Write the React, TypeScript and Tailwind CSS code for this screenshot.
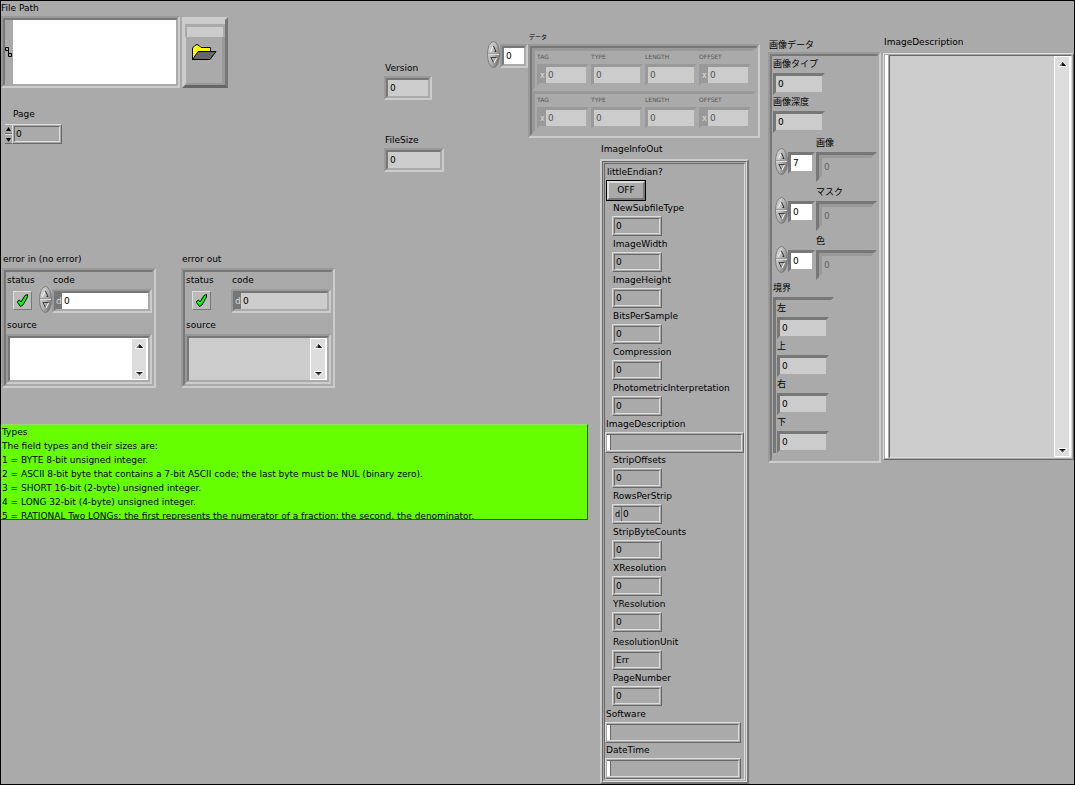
import { useId, useState } from 'react';
import type { ReactNode } from 'react';
import clsx from 'clsx';

const OUTER = 'border-2 border-t-[#999] border-l-[#999] border-r-[#ccc] border-b-[#ccc]';
const INNER = 'border-2 border-t-[#777] border-l-[#777] border-r-[#aaa] border-b-[#aaa]';

type SunkenProps = { className?: string; inner?: string; children?: ReactNode };

const Sunken = ({ className, inner, children }: SunkenProps) => (
  <div className={clsx('flex', OUTER, className)}>
    <div className={clsx('flex min-w-0 flex-1', INNER, inner)}>{children}</div>
  </div>
);

const Etched = ({ className, inner, children }: SunkenProps) => (
  <div
    className={clsx(
      'flex border border-t-[#ddd] border-l-[#ddd] border-r-[#666] border-b-[#666] bg-[#aaa] p-px',
      className,
    )}
  >
    <div
      className={clsx(
        'flex min-w-0 flex-1 border border-t-[#666] border-l-[#666] border-r-[#ddd] border-b-[#ddd]',
        inner,
      )}
    >
      {children}
    </div>
  </div>
);

type ValueProps = { id?: string; label?: string; value?: string; className?: string };

const Value = ({ id, label, value = '0', className = 'pl-0.5' }: ValueProps) => {
  const [text, setText] = useState(value);
  return (
    <input
      id={id}
      aria-label={label}
      type="text"
      value={text}
      onChange={(event) => setText(event.target.value)}
      className={clsx('h-full w-full min-w-0 flex-1 bg-transparent outline-none', className)}
    />
  );
};

/* Oval increment / decrement knob */
const Knob = ({ label }: { label: string }) => (
  <button type="button" aria-label={label} className="block h-[27px] w-[13px] shrink-0">
    <svg viewBox="0 0 13 27" className="block h-full w-full">
      <defs>
        <linearGradient id="knob" x1="0" y1="0" x2="1" y2="0.6">
          <stop offset="0" stopColor="#ddd" />
          <stop offset="0.6" stopColor="#b4b4b4" />
          <stop offset="1" stopColor="#777" />
        </linearGradient>
      </defs>
      <ellipse cx="6.5" cy="13.5" rx="6" ry="13" fill="url(#knob)" stroke="#777" strokeWidth="0.9" />
      <path d="M1 12.500h11" stroke="#999" />
      <path d="M1 13.500h11" stroke="#ddd" />
      <path d="M3.500 10.500L6 5.500" stroke="#fff" fill="none" />
      <path d="M6.500 5L9 10.500H7.500" stroke="#333" fill="none" />
      <path d="M3.500 16.500h6" stroke="#444" fill="none" />
      <path d="M4 16.500L6.500 21.500" stroke="#444" fill="none" />
      <path d="M9.500 17L7 22" stroke="#fff" fill="none" />
    </svg>
  </button>
);

const Arrow = ({ down = false, label }: { down?: boolean; label: string }) => (
  <button type="button" aria-label={label} className="flex h-2.5 w-full items-center justify-center">
    {down ? (
      <svg viewBox="0 0 9 6" className="h-1.5 w-[9px]">
        <path d="M0 1L4.500 6L9 1V0H0Z" fill="#fff" />
        <path d="M1 1L4.500 5L8 1Z" fill="#777" />
        <path d="M1 1L4.500 3L8 1Z" fill="#111" />
      </svg>
    ) : (
      <svg viewBox="0 0 9 6" className="h-1.5 w-[9px]">
        <path d="M0 5L4.500 0L9 5V6H0Z" fill="#fff" />
        <path d="M1 5L4.500 1L8 5Z" fill="#777" />
        <path d="M4.500 1L8 5H4Z" fill="#111" />
      </svg>
    )}
  </button>
);

const Scrollbar = () => (
  <div className="flex w-[17px] shrink-0 flex-col justify-between border border-r-2 border-white bg-[#ddd] pt-0.5">
    <Arrow label="Scroll up" />
    <Arrow label="Scroll down" down />
  </div>
);

const Label = ({ id, children, className }: { id?: string; children: ReactNode; className?: string }) => (
  <label htmlFor={id} className={clsx('block leading-[14px] whitespace-nowrap', className)}>
    {children}
  </label>
);

const SizeField = ({ label, className }: { label: string; className: string }) => {
  const id = useId();
  return (
    <div>
      <Label id={id} className="pb-px pl-px">{label}</Label>
      <Sunken className={clsx('h-6', className)} inner="bg-[#ccc]">
        <Value id={id} />
      </Sunken>
    </div>
  );
};

const FilePath = () => (
  <div>
    <Label id="path" className="pb-px">File Path</Label>
    <div className="flex items-end gap-0.5">
      <Sunken className="h-[72px] w-[179px]">
        <svg viewBox="0 0 8 64" className="h-16 w-2 shrink-0">
          <path d="M.5 27.500h3v3h-3zM3.500 33.500h3v3h-3zM3.500 30.500v3" fill="none" stroke="#000" />
        </svg>
        <textarea id="path" className="h-full min-w-0 flex-1 resize-none bg-white outline-none" />
      </Sunken>
      <button
        type="button"
        aria-label="Browse"
        className="flex h-[71px] w-[46px] flex-col border-3 border-t-[#ccc] border-r-[#777] border-b-[#666] border-l-[#ccc] bg-[#aaa]"
      >
        <span className="block h-1 w-full bg-[#ccc]" />
        <span className="mx-0.5 block h-[13px] self-stretch border-t-3 border-[#aaa] bg-[#ccc]" />
        <span className="flex w-full flex-1 justify-center border-r-3 border-b-2 border-l border-r-[#999] border-b-[#999] border-l-[#ccc] pt-[7px]">
          <svg viewBox="0 0 26 17" className="h-[17px] w-[26px]">
            <path d="M1.500 15.500V4L4 1.500L6 .5L8 1.500L10 3.500H19.500V7.500L14 15.500Z" fill="#ff0" stroke="#000" />
            <path d="M1.500 15.500L7 7.500H25L19 15.500Z" fill="#666" stroke="#000" />
          </svg>
        </span>
      </button>
    </div>
  </div>
);

const PageField = () => (
  <div>
    <Label id="page" className="pb-[3px] pl-3">Page</Label>
    <div className="flex pl-1">
      <div className="flex w-[7px] flex-col">
        {['M1 6L3.500 2L6 6Z', 'M1 3L3.500 7L6 3Z'].map((d, i) => (
          <button
            key={d}
            type="button"
            aria-label={i === 0 ? 'Next page' : 'Previous page'}
            className="h-2.5 w-full border-t border-b border-t-[#ddd] border-b-[#666]"
          >
            <svg viewBox="0 0 7 8" className="block h-2 w-[7px]">
              <path d={d} />
            </svg>
          </button>
        ))}
      </div>
      <Etched className="h-5 w-[50px]">
        <Value id="page" className="pl-px" />
      </Etched>
    </div>
  </div>
);

const ErrorCluster = ({ title, editable = false }: { title: string; editable?: boolean }) => {
  const id = useId();
  const fill = editable ? 'bg-white' : 'bg-[#ccc]';
  return (
    <section>
      <h2 className="pb-0.5 pl-px leading-[14px]">{title}</h2>
      <Sunken className="h-[120px] w-[154px]" inner="flex-col pt-px">
        <div className="flex">
          <div className="w-[33px] pl-px">
            <Label>status</Label>
            <button
              type="button"
              aria-label="status"
              className="mt-1 ml-1.5 flex h-[19px] w-[19px] items-center justify-center border border-t-[#ddd] border-l-[#ddd] border-r-[#777] border-b-[#777] bg-[#bbb]"
            >
              <svg viewBox="0 0 13 15" className="h-[15px] w-[13px] shrink-0">
                <path
                  d="M1.500 8.500L3.500 7L5 9L9 2.500L11.500 1.500V4L7 12L4.500 13.500L1.500 9.500Z"
                  fill="#0f0"
                  stroke="#000"
                />
              </svg>
            </button>
          </div>
          <div className="w-[13px] pt-[13px]">{editable && <Knob label="Change code" />}</div>
          <div className="min-w-0 flex-1">
            <Label id={`${id}code`} className="pb-0.5 pl-px">code</Label>
            <Sunken className="h-6" inner={fill}>
              <span className="w-1.5 bg-[#777] leading-4 text-[#ddd]">d</span>
              <Value id={`${id}code`} />
            </Sunken>
          </div>
        </div>
        <Label id={`${id}source`} className="pt-[5px] pb-0.5 pl-px">source</Label>
        <Sunken className="min-h-0 flex-1" inner={fill}>
          <textarea id={`${id}source`} className="min-w-0 flex-1 resize-none outline-none" />
          <Scrollbar />
        </Sunken>
      </Sunken>
    </section>
  );
};

const IndexBox = ({ value = '0', label }: { value?: string; label: string }) => (
  <Sunken className="h-6 w-7" inner="bg-white">
    <Value label={label} value={value} />
  </Sunken>
);

const tagFields = [
  { name: 'TAG', hex: true },
  { name: 'TYPE', hex: false },
  { name: 'LENGTH', hex: false },
  { name: 'OFFSET', hex: true },
];

const TagRow = () => {
  const id = useId();
  return (
    <div className="flex h-[43px] gap-0.5 border-3 border-t-[#999] border-l-[#999] border-r-[#aaa] border-b-[#aaa] pt-0.5 pl-0.5">
      {tagFields.map(({ name, hex }) => (
        <div key={name} className="w-[52px]">
          <label htmlFor={id + name} className="block pb-[3px] text-[6px] leading-[8px] text-[#555]">
            {name}
          </label>
          <div className="flex h-[22px] border-3 border-t-[#999] border-l-[#999] border-r-[#aaa] border-b-[#aaa] bg-[#ccc] text-[#555]">
            {hex && <span className="w-1.5 bg-[#999] text-[8px] leading-[18px] text-[#ddd]">x</span>}
            <Value id={id + name} />
          </div>
        </div>
      ))}
    </div>
  );
};

const TagArray = () => (
  <section className="col-span-2 pt-8">
    <h2 className="pl-[42px] text-[6px] leading-[8px]">データ</h2>
    <div className="flex items-start">
      <Knob label="Change tag index" />
      <div className="pt-[3px]">
        <IndexBox label="Tag index" />
      </div>
      <div className="pt-[3px]">
        <Sunken className="w-[232px]" inner="flex-col">
          <TagRow />
          <TagRow />
        </Sunken>
      </div>
    </div>
  </section>
);

type InfoProps = { label: string; value?: string; hex?: boolean; gap?: string };

const InfoField = ({ label, value, hex, gap }: InfoProps) => {
  const id = useId();
  return (
    <div className={clsx('pb-px pl-[7px]', gap)}>
      <Label id={id} className="pb-px pl-px">{label}</Label>
      <Etched className="h-5 w-[50px]" inner={hex ? 'border-l-0' : ''}>
        {hex && <span className="border-r border-[#666] px-px text-[8px] leading-4">d</span>}
        <Value id={id} value={value} className="pl-px" />
      </Etched>
    </div>
  );
};

const InfoString = ({ label, width = 'w-[139px]' }: { label: string; width?: string }) => {
  const id = useId();
  return (
    <div>
      <Label id={id} className="pb-px pl-px">{label}</Label>
      <Etched className={clsx('h-[21px]', width)} inner="border-l-0">
        <span className="w-1 border-r border-[#666] bg-white" />
        <Value id={id} value="" />
      </Etched>
    </div>
  );
};

const ImageInfo = () => {
  const [little, setLittle] = useState(false);
  return (
    <section className="row-span-2 pt-1 pl-3">
      <h2 className="pb-[3px] pl-px leading-[14px]">ImageInfoOut</h2>
      <div className="w-[149px] border-2 border-t-[#ccc] border-l-[#ccc] border-r-[#777] border-b-[#777]">
        <div className="border border-t-[#666] border-l-[#666] border-r-[#ddd] border-b-[#ddd] p-px">
          <div className="border border-t-[#666] border-l-[#666] border-r-[#ddd] border-b-[#ddd] pt-px">
            <Label id="endian" className="pb-px pl-0.5">littleEndian?</Label>
            <button
              id="endian"
              type="button"
              onClick={() => setLittle((current) => !current)}
              className="ml-px block h-[21px] w-10 border border-black"
            >
              <span className="block border-2 border-t-[#ddd] border-l-[#ddd] border-r-[#777] border-b-[#777] leading-[15px]">
                {little ? 'ON' : 'OFF'}
              </span>
            </button>
            <InfoField label="NewSubfileType" />
            <InfoField label="ImageWidth" />
            <InfoField label="ImageHeight" />
            <InfoField label="BitsPerSample" />
            <InfoField label="Compression" />
            <InfoField label="PhotometricInterpretation" />
            <InfoString label="ImageDescription" />
            <InfoField label="StripOffsets" />
            <InfoField label="RowsPerStrip" hex />
            <InfoField label="StripByteCounts" />
            <InfoField label="XResolution" />
            <InfoField label="YResolution" />
            <InfoField label="ResolutionUnit" value="Err" gap="pt-0.5" />
            <InfoField label="PageNumber" />
            <InfoString label="Software" width="w-[136px]" />
            <InfoString label="DateTime" width="w-[136px]" />
          </div>
        </div>
      </div>
    </section>
  );
};

const PictureField = ({ label }: { label: string }) => {
  const id = useId();
  return (
    <div>
      <Label id={id} className="pb-0.5">{label}</Label>
      <div className="flex h-[22px] w-[52px] border-3 border-t-[#777] border-l-[#777] border-r-[#aaa] border-b-[#aaa] bg-[#ccc]">
        <Value id={id} />
      </div>
    </div>
  );
};

const PictureArray = ({ label, index }: { label: string; index: string }) => (
  <div>
    <Label className="pb-0.5 pl-[43px]">{label}</Label>
    <div className="flex h-[30px] items-start pl-0.5">
      <div className="-mt-1">
        <Knob label={`Change ${label}`} />
      </div>
      <div className="h-[22px] w-[27px] border-3 border-t-[#777] border-l-[#777] border-r-[#aaa] border-b-[#aaa] bg-white">
        <Value label={`${label} index`} value={index} />
      </div>
      <div className="ml-px h-[30px] w-[61px] border-3 border-t-[#777] border-l-[#777] border-r-[#aaa] border-b-[#aaa]">
        <div className="h-6 border-3 border-t-[#999] border-l-[#999] border-r-[#aaa] border-b-[#aaa] text-[#666]">
          <Value label={label} />
        </div>
      </div>
    </div>
  </div>
);

const PictureData = () => (
  <section className="shrink-0 pt-[37px]">
    <h2 className="pl-px leading-[14px]">画像データ</h2>
    <Sunken className="w-[113px]" inner="flex-col pt-px pb-1.5 pl-px">
      <PictureField label="画像タイプ" />
      <PictureField label="画像深度" />
      <div className="flex flex-col gap-[3px] pt-[3px] pb-px">
        <PictureArray label="画像" index="7" />
        <PictureArray label="マスク" index="0" />
        <PictureArray label="色" index="0" />
      </div>
      <Label className="pb-0.5">境界</Label>
      <div className="w-[61px] border-t-3 border-r-3 border-l-3 border-t-[#777] border-r-[#aaa] border-l-[#777] pt-px pl-px">
        <PictureField label="左" />
        <PictureField label="上" />
        <PictureField label="右" />
        <PictureField label="下" />
      </div>
    </Sunken>
  </section>
);

const Description = () => (
  <section className="min-w-0 flex-1 pt-[34px] pl-0.5">
    <Label id="description" className="pb-1 pl-px">ImageDescription</Label>
    <div className="flex h-[407px] border border-t-[#ddd] border-l-[#ddd] border-r-[#666] border-b-[#666] p-px">
      <span className="mr-px w-[3px] bg-white" />
      <div className="flex min-w-0 flex-1 border border-t-[#666] border-l-[#666] border-r-[#ddd] border-b-[#ddd] bg-[#ccc]">
        <textarea id="description" className="min-w-0 flex-1 resize-none outline-none" />
        <Scrollbar />
      </div>
    </div>
  </section>
);

const typeLines = [
  'Types',
  'The field types and their sizes are:',
  '1 = BYTE 8-bit unsigned integer.',
  '2 = ASCII 8-bit byte that contains a 7-bit ASCII code; the last byte must be NUL (binary zero).',
  '3 = SHORT 16-bit (2-byte) unsigned integer.',
  '4 = LONG 32-bit (4-byte) unsigned integer.',
  '5 = RATIONAL Two LONGs: the first represents the numerator of a fraction; the second, the denominator.',
];

const App = () => (
  <main className="flex min-h-screen overflow-hidden border border-black bg-[#aaa] font-['DejaVu_Sans','Noto_Sans_CJK_JP',sans-serif] text-[9px] text-black">
    <div className="grid w-[767px] shrink-0 grid-cols-[486px_101px_1fr] grid-rows-[137px_auto_1fr]">
      <div className="row-span-2 pb-9">
        <div className="flex">
          <div className="flex w-[383px] flex-col gap-[19px]">
            <FilePath />
            <PageField />
          </div>
          <div className="flex flex-col gap-[33px] pt-[60px]">
            <SizeField label="Version" className="w-12" />
            <SizeField label="FileSize" className="w-[60px]" />
          </div>
        </div>
        <div className="flex gap-[25px] pt-20 pl-px">
          <ErrorCluster title="error in (no error)" editable />
          <ErrorCluster title="error out" />
        </div>
      </div>
      <TagArray />
      <ImageInfo />
      <div className="col-span-2 col-start-1 row-start-3 h-24 overflow-hidden border-t border-r border-b border-t-[#9d6] border-r-[#260] border-b-[#260] bg-[#6f0] pl-px leading-[14px] whitespace-nowrap">
        {typeLines.map((line) => (
          <p key={line}>{line}</p>
        ))}
      </div>
    </div>
    <PictureData />
    <Description />
  </main>
);

export default App;
